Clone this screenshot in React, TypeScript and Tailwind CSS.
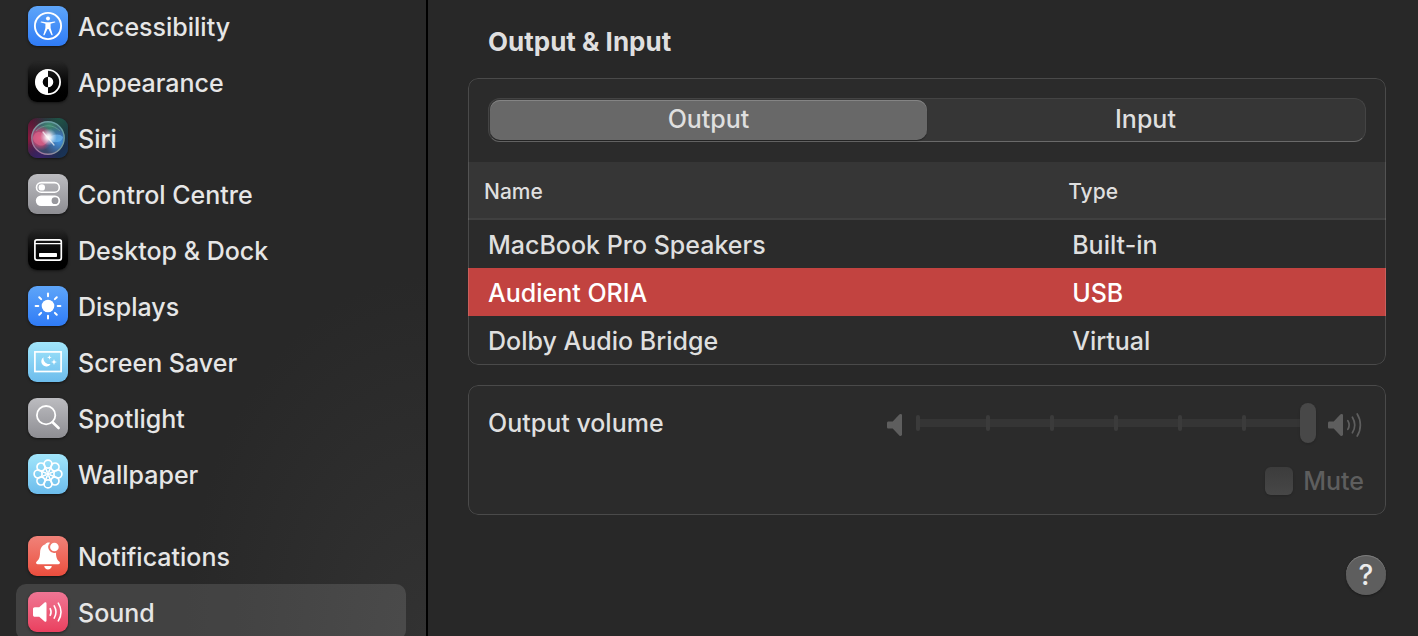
import { useState, type ReactNode } from "react";
import clsx from "clsx";

const ROTATIONS = [0, 45, 90, 135, 180, 225, 270, 315];

const BLUE = "bg-linear-to-b from-[#5ea5f9] to-[#2f7bf6]";
const BLACK = "bg-linear-to-b from-[#262626] via-[#080808] to-black";
const GREY = "bg-linear-to-b from-[#bcbcc0] to-[#8e8e93]";
const SKY = "bg-linear-to-b from-[#a2e6fb] to-[#6cbcec]";

function Glyph({ children }: { children: ReactNode }) {
  return (
    <svg viewBox="0 0 40 40" className="size-10" fill="none" stroke="white" aria-hidden="true">
      {children}
    </svg>
  );
}

function SiriGlyph() {
  return (
    <Glyph>
      <defs>
        <radialGradient id="siri-pink" cx="0" cy="0.5" r="0.6">
          <stop offset="0" stopColor="#8a1a3e" />
          <stop offset="1" stopColor="#8a1a3e" stopOpacity="0" />
        </radialGradient>
        <radialGradient id="siri-green" cx="0.8" cy="0" r="0.7">
          <stop offset="0" stopColor="#1f5546" />
          <stop offset="1" stopColor="#1f5546" stopOpacity="0" />
        </radialGradient>
        <radialGradient id="siri-purple" cx="0.3" cy="1" r="0.5">
          <stop offset="0" stopColor="#3a2268" />
          <stop offset="1" stopColor="#3a2268" stopOpacity="0" />
        </radialGradient>
        <radialGradient id="siri-orb-pink" cx="0.25" cy="0.5" r="0.4">
          <stop offset="0" stopColor="#d9547c" />
          <stop offset="0.6" stopColor="#c04874" stopOpacity="0.8" />
          <stop offset="1" stopColor="#c04874" stopOpacity="0" />
        </radialGradient>
        <radialGradient id="siri-orb-blue" cx="0.85" cy="0.6" r="0.5">
          <stop offset="0" stopColor="#3f92e0" />
          <stop offset="1" stopColor="#3f92e0" stopOpacity="0" />
        </radialGradient>
        <radialGradient id="siri-orb-green" cx="0.55" cy="0.1" r="0.5">
          <stop offset="0" stopColor="#3f8a70" />
          <stop offset="1" stopColor="#3f8a70" stopOpacity="0" />
        </radialGradient>
        <radialGradient id="siri-glow">
          <stop offset="0" stopColor="white" />
          <stop offset="0.3" stopColor="white" stopOpacity="0.8" />
          <stop offset="1" stopColor="#d8e8ff" stopOpacity="0" />
        </radialGradient>
        <linearGradient id="siri-ring" x1="0" y1="1" x2="1" y2="0">
          <stop offset="0" stopColor="#b06a9c" />
          <stop offset="0.5" stopColor="#7d9da0" />
          <stop offset="1" stopColor="#5fa0a5" />
        </linearGradient>
      </defs>
      <g stroke="none">
        <rect width="40" height="40" fill="url(#siri-pink)" />
        <rect width="40" height="40" fill="url(#siri-green)" />
        <rect width="40" height="40" fill="url(#siri-purple)" />
        <circle cx="20" cy="20" r="16" fill="#3a4668" />
        <circle cx="20" cy="20" r="16" fill="url(#siri-orb-green)" />
        <circle cx="20" cy="20" r="16" fill="url(#siri-orb-pink)" />
        <circle cx="20" cy="20" r="16" fill="url(#siri-orb-blue)" />
        <path d="M5 20c1-7 8-8 12-3l4 4c-3 7-8 8-12 5-2-1-4-3-4-6z" fill="#e8698f" opacity="0.55" />
        <path d="M20 21c4-5 11-6 15-2-1 6-10 7-15 2z" fill="#6cb8ee" opacity="0.7" />
        <circle cx="20.5" cy="19" r="8.5" fill="url(#siri-glow)" />
      </g>
      <path d="M15 14l11 13" strokeWidth="1.2" strokeLinecap="round" opacity="0.7" />
      <circle cx="20" cy="20" r="16.2" stroke="url(#siri-ring)" strokeWidth="1.4" />
      <path d="M8 13c7-7 17-7 24 0" stroke="#6fb59c" strokeWidth="0.8" opacity="0.7" />
    </Glyph>
  );
}

type Item = { label: string; tile: string; icon: ReactNode };

const GROUPS: Item[][] = [
  [
    {
      label: "Accessibility",
      tile: BLUE,
      icon: (
        <Glyph>
          <circle cx="20" cy="20" r="13.1" strokeWidth="1.9" />
          <circle cx="20" cy="12.6" r="2" fill="white" stroke="none" />
          <path
            d="M13.4 15.4l4.9.8h3.4l4.9-.8c.9-.1 1 1 .2 1.2l-4.2 1.1v4.2l2 6.5c.3 1-.9 1.3-1.3.4L20.5 23h-1l-2.8 5.8c-.4.9-1.6.6-1.3-.4l2-6.5v-4.2l-4.2-1.1c-.8-.2-.7-1.3.2-1.2z"
            fill="white"
            stroke="none"
          />
        </Glyph>
      ),
    },
    {
      label: "Appearance",
      tile: BLACK,
      icon: (
        <Glyph>
          <circle cx="20" cy="20" r="12.1" strokeWidth="1.8" />
          <path d="M20 7.5a12.5 12.5 0 0 0 0 25v-7.2a5.3 5.3 0 0 1 0-10.6z" fill="white" stroke="none" />
          <path d="M20 14.7a5.3 5.3 0 0 1 0 10.6z" fill="white" stroke="none" />
        </Glyph>
      ),
    },
    {
      label: "Siri",
      tile: "bg-linear-to-br from-[#4a1230] via-[#1c2440] to-[#17365a]",
      icon: <SiriGlyph />,
    },
    {
      label: "Control Centre",
      tile: GREY,
      icon: (
        <Glyph>
          <rect x="8.5" y="8.6" width="22.8" height="9.6" rx="4.8" strokeWidth="1.6" />
          <circle cx="13.8" cy="13.4" r="3.2" fill="white" stroke="none" />
          <rect x="7.8" y="21.5" width="24.4" height="10.4" rx="5.2" fill="white" stroke="none" />
          <circle cx="27" cy="26.7" r="3.4" fill="#98989d" stroke="none" />
        </Glyph>
      ),
    },
    {
      label: "Desktop & Dock",
      tile: BLACK,
      icon: (
        <Glyph>
          <rect x="6.9" y="9.9" width="26.4" height="20.2" rx="2" strokeWidth="1.7" />
          <path d="M7 13.6h26" strokeWidth="1.3" />
          <rect x="11" y="23" width="18" height="4" rx="0.8" fill="white" stroke="none" />
        </Glyph>
      ),
    },
    {
      label: "Displays",
      tile: BLUE,
      icon: (
        <Glyph>
          <circle cx="20" cy="20" r="6.3" fill="white" stroke="none" />
          {ROTATIONS.map((angle) => (
            <path key={angle} d="M20 7.6v2.7" strokeWidth="2" strokeLinecap="round" transform={`rotate(${angle} 20 20)`} />
          ))}
        </Glyph>
      ),
    },
    {
      label: "Screen Saver",
      tile: SKY,
      icon: (
        <Glyph>
          <rect x="6.9" y="9.9" width="26.2" height="19.6" strokeWidth="1.7" />
          <g fill="white" stroke="none">
            <path d="M15.6 15.2a5 5 0 1 0 7 6.7 5.6 5.6 0 0 1-7-6.7z" />
            <path d="M21.4 13.1l.6 1.7 1.7.6-1.7.6-.6 1.7-.6-1.7-1.7-.6 1.7-.6z" />
            <path d="M26 17l.8 2.2 2.2.8-2.2.8L26 23l-.8-2.2L23 20l2.2-.8z" />
          </g>
        </Glyph>
      ),
    },
    {
      label: "Spotlight",
      tile: GREY,
      icon: (
        <Glyph>
          <circle cx="18.1" cy="17.2" r="9.2" strokeWidth="1.8" />
          <path d="M24.6 24.2l6 5.8" strokeWidth="2.6" strokeLinecap="round" />
        </Glyph>
      ),
    },
    {
      label: "Wallpaper",
      tile: SKY,
      icon: (
        <Glyph>
          {ROTATIONS.map((angle) => (
            <g key={angle} transform={`rotate(${angle} 20 20)`}>
              <circle cx="20" cy="10.1" r="4" strokeWidth="1.7" />
              <path d="M17.2 13l2.1 5M22.8 13l-2.1 5" strokeWidth="1.2" />
            </g>
          ))}
          <circle cx="20" cy="20" r="2" fill="white" stroke="none" />
        </Glyph>
      ),
    },
  ],
  [
    {
      label: "Notifications",
      tile: "bg-linear-to-b from-[#f08279] to-[#eb4d3d]",
      icon: (
        <Glyph>
          <g fill="white" stroke="none">
            <path d="M22 6.8a6 6 0 0 0 5.9 10c.3 5.4 1.4 7 3.4 8.8 1.3 1.2.7 2.6-.8 2.6h-21c-1.5 0-2.1-1.4-.8-2.6 2.2-2 3.2-3.6 3.4-9.3.2-4.4 2.3-7.2 5.3-8 .5-1.5 3-2 4.6-1.5z" />
            <circle cx="26.4" cy="11" r="4.3" />
            <path d="M16.2 30h7.6c-.3 2.2-1.9 3.5-3.8 3.5s-3.5-1.3-3.8-3.5z" />
          </g>
        </Glyph>
      ),
    },
    {
      label: "Sound",
      tile: "bg-linear-to-b from-[#ef7594] to-[#ea3f5f]",
      icon: (
        <Glyph>
          <path
            d="M6.8 15.2h4.4l5.4-4.7c.8-.7 1.9-.2 1.9.9v17.2c0 1.1-1.1 1.6-1.9.9l-5.4-4.7H6.8c-1.1 0-1.8-.7-1.8-1.8v-6c0-1.1.7-1.8 1.8-1.8z"
            fill="white"
            stroke="none"
          />
          <path
            d="M22.2 16.6c1.1 2.1 1.1 4.7 0 6.8M26.2 13.9c2.2 3.8 2.2 8.4 0 12.2M30.3 11.2c3.4 5.5 3.4 12.1 0 17.6"
            strokeWidth="1.6"
            strokeLinecap="round"
          />
        </Glyph>
      ),
    },
  ],
];

const DEVICES = [
  { name: "MacBook Pro Speakers", type: "Built-in" },
  { name: "Audient ORIA", type: "USB" },
  { name: "Dolby Audio Bridge", type: "Virtual" },
];

const TABS = ["Output", "Input"] as const;

const CARD =
  "relative overflow-hidden rounded-[10px] bg-[#2b2b2b] after:pointer-events-none after:absolute after:inset-0 after:rounded-[10px] after:border after:border-white/15";

function Sidebar() {
  return (
    <aside className="w-107 shrink-0 overflow-hidden border-r-2 border-black bg-radial-[at_100%_100%] from-[#323232] to-[#282828] to-40%">
      <nav className="-mt-0.5 flex flex-col gap-[26px] px-4">
        {GROUPS.map((group) => (
          <ul key={group[0].label}>
            {group.map((item) => (
              <li key={item.label}>
                <a
                  href="#"
                  aria-current={item.label === "Sound" ? "page" : undefined}
                  className={clsx(
                    "mr-1 flex h-14 items-center gap-2.5 rounded-[10px] px-3 text-[#e6e6e6]",
                    item.label === "Sound" && "bg-white/12",
                  )}
                >
                  <span className={clsx("size-10 overflow-hidden rounded-[9px] shadow-sm shadow-black/40", item.tile)}>
                    {item.icon}
                  </span>
                  <span className="pt-0.5">{item.label}</span>
                </a>
              </li>
            ))}
          </ul>
        ))}
      </nav>
    </aside>
  );
}

function DeviceTable() {
  return (
    <table className="w-full table-fixed border-separate border-spacing-0 text-left">
      <thead>
        <tr className="h-[58px] bg-[#363636] text-[21px]">
          <th scope="col" className="w-7/11 border-b-2 border-[#404040] pt-1 pl-4 font-medium">
            Name
          </th>
          <th scope="col" className="border-b-2 border-[#404040] pt-1 pl-4 font-medium">
            Type
          </th>
        </tr>
      </thead>
      <tbody>
        {DEVICES.map((device) => (
          <tr
            key={device.name}
            className={clsx("h-12", device.name === "Audient ORIA" && "bg-[#c24340] text-white")}
          >
            <td className="pt-0.5 pl-5">{device.name}</td>
            <td className="pt-0.5 pl-5">{device.type}</td>
          </tr>
        ))}
      </tbody>
    </table>
  );
}

function VolumeSlider() {
  return (
    <div className="flex items-center gap-3">
      <svg viewBox="0 0 18 24" className="mt-1 h-6 w-[18px] fill-[#5e5e5e]" aria-hidden="true">
        <path d="M2.6 8.4h4.1l6.6-6.8c.9-.9 2.7-.6 2.7.8v19.2c0 1.4-1.8 1.7-2.7.8l-6.6-6.8H2.6C1.5 15.6 1 15 1 14v-4c0-1 .5-1.6 1.6-1.6z" />
      </svg>
      <div className="relative h-10 w-100">
        <input
          id="volume"
          type="range"
          min={0}
          max={100}
          defaultValue={100}
          disabled
          className="block h-10 w-full appearance-none bg-transparent [&::-webkit-slider-runnable-track]:h-2 [&::-webkit-slider-runnable-track]:rounded-full [&::-webkit-slider-runnable-track]:bg-[#353535] [&::-webkit-slider-thumb]:-mt-4 [&::-webkit-slider-thumb]:h-10 [&::-webkit-slider-thumb]:w-4 [&::-webkit-slider-thumb]:appearance-none [&::-webkit-slider-thumb]:rounded-full [&::-webkit-slider-thumb]:bg-[#484848] [&::-webkit-slider-thumb]:shadow-sm"
        />
        <div className="pointer-events-none absolute inset-0 flex items-center gap-15">
          {[0, 1, 2, 3, 4, 5].map((tick) => (
            <span key={tick} className="h-4 w-1 rounded-full bg-[#3b3b3b] first:mr-1.5" />
          ))}
        </div>
      </div>
      <svg viewBox="0 0 36 26" className="mt-1 h-[26px] w-9 fill-none stroke-[#5e5e5e]" aria-hidden="true">
        <path
          d="M1.6 9.4h4.1l6.6-6.8c.9-.9 2.7-.6 2.7.8v19.2c0 1.4-1.8 1.7-2.7.8l-6.6-6.8H1.6C.5 16.6 0 16 0 15v-4c0-1 .5-1.6 1.6-1.6z"
          className="fill-[#5e5e5e] stroke-none"
        />
        <path
          d="M19.8 8.6c1.6 2.6 1.6 6.2 0 8.8M24.4 5.2c2.9 4.8 2.9 10.8 0 15.6M29.2 2c4.2 6.7 4.2 15.3 0 22"
          strokeWidth="1.7"
          strokeLinecap="round"
        />
      </svg>
    </div>
  );
}

export default function App() {
  const [tab, setTab] = useState<(typeof TABS)[number]>("Output");

  return (
    <div className="flex h-screen overflow-hidden bg-[#282828] font-['Inter',sans-serif] text-[25px] leading-8 font-medium text-[#dfdfdf]">
      <Sidebar />
      <main className="min-w-0 flex-1 overflow-hidden pt-[26px] pr-8 pl-10">
        <h1 className="px-5 text-[26px] font-bold">Output &amp; Input</h1>

        <section className={clsx(CARD, "mt-5 pb-px")}>
          <div className="px-5 py-5">
            <div
              role="tablist"
              className="grid h-11 grid-cols-2 rounded-xl border border-[#444] border-b-[#6a6a6a] bg-[#363636] p-px"
            >
              {TABS.map((name) => (
                <button
                  key={name}
                  type="button"
                  role="tab"
                  aria-selected={tab === name}
                  onClick={() => setTab(name)}
                  className={clsx(
                    "rounded-[10px] pb-0.5",
                    tab === name && "bg-[#686868] shadow-[inset_0_1px_0_#848484,0_1px_1px_#222]",
                  )}
                >
                  {name}
                </button>
              ))}
            </div>
          </div>
          <DeviceTable />
        </section>

        <section className={clsx(CARD, "mt-5 flex h-[130px] flex-col gap-[22px] pt-[18px] pr-[22px] pl-5")}>
          <div className="flex items-center justify-between">
            <label htmlFor="volume">Output volume</label>
            <VolumeSlider />
          </div>
          <label className="flex items-center justify-end gap-2.5 text-[#5e5e5e]">
            <input
              type="checkbox"
              disabled
              className="size-7 appearance-none rounded-md bg-linear-to-b from-[#3c3c3c] to-[#474747] shadow-sm"
            />
            Mute
          </label>
        </section>

        <div className="mt-10 flex justify-end">
          <button
            type="button"
            aria-label="Help"
            className="size-10 rounded-full bg-[#5e5e5e] text-[28px] text-[#ececec] shadow-[inset_0_1px_0_#7c7c7c,0_1px_2px_#1a1a1a]"
          >
            ?
          </button>
        </div>
      </main>
    </div>
  );
}
